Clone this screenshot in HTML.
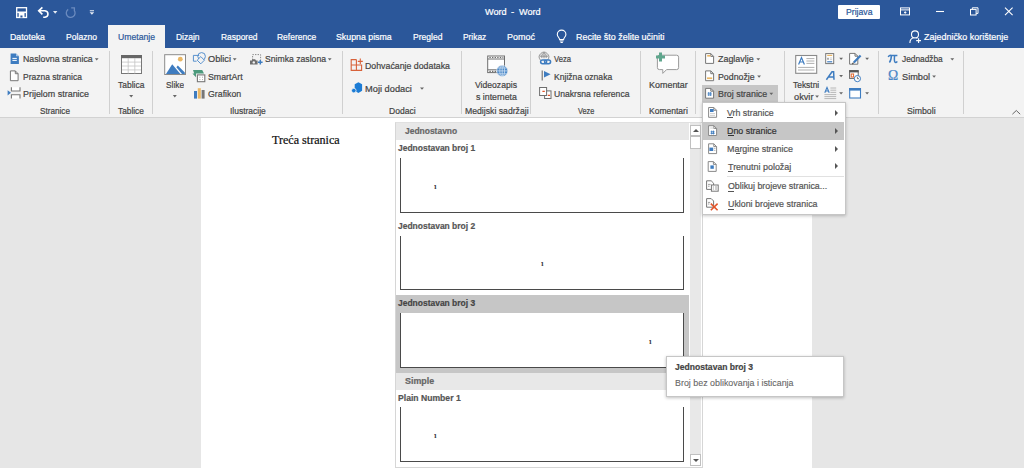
<!DOCTYPE html>
<html><head><meta charset="utf-8"><title>Word</title>
<style>
html,body{margin:0;padding:0}
body{width:1024px;height:468px;overflow:hidden;position:relative;background:#e6e6e6;font-family:"Liberation Sans",sans-serif;font-size:9.7px}
.t{position:absolute;white-space:pre;line-height:1;transform-origin:0 0;font-size:9.7px;-webkit-text-stroke:.22px currentColor}
.a{position:absolute}
svg{position:absolute;overflow:visible}
.hdr{left:0;top:0;width:1024px;height:48px;background:#2b579a}
.tab{left:108px;top:25px;width:57px;height:24px;background:#f3f3f3}
.rib{left:0;top:48px;width:1024px;height:69px;background:#f3f3f3;border-bottom:1px solid #d2d2d2}
.dv{position:absolute;top:51px;width:1px;height:63px;background:#d0d0d0}
.page{left:201px;top:118px;width:611px;height:350px;background:#fff}
.gal{left:395px;top:122px;width:308px;height:346px;background:#fff;border:1px solid #d6d6d6;border-top-color:#e0e0e0;box-sizing:border-box}
.band{position:absolute;left:396px;width:293px;height:17px;background:#e8e8e8}
.pv{position:absolute;left:400px;width:284px;height:55px;border:1px solid #4a4a4a;border-top:none;box-sizing:border-box;background:#fff}
.one{position:absolute;width:2px;height:4px;background:#555}
.menu{left:702px;top:102px;width:144px;height:113px;background:#fff;box-shadow:0 1px 3px rgba(0,0,0,.22);border:1px solid #c6c6c6;box-sizing:border-box}
.tip{left:666px;top:356px;width:178px;height:41px;background:#fff;border:1px solid #c6c6c6;box-sizing:border-box;box-shadow:0 1px 3px rgba(0,0,0,.25)}
.arr{position:absolute;width:0;height:0;border-left:2.5px solid transparent;border-right:2.5px solid transparent;border-top:3px solid #666}
.sub{position:absolute;width:0;height:0;border-top:3px solid transparent;border-bottom:3px solid transparent;border-left:3.5px solid #555}
.ul{position:absolute;height:1px;background:#555}

</style></head>
<body>
<div class="a hdr"></div>
<div class="a tab"></div>
<div class="a rib"></div>
<div class="a page"></div>

<!-- dividers -->
<div class="dv" style="left:109px"></div><div class="dv" style="left:152px"></div><div class="dv" style="left:342px"></div>
<div class="dv" style="left:461px"></div><div class="dv" style="left:530px"></div><div class="dv" style="left:640px"></div>
<div class="dv" style="left:695px"></div><div class="dv" style="left:784px"></div><div class="dv" style="left:878px"></div><div class="dv" style="left:963px"></div>

<!-- Broj stranice highlight -->
<div class="a" style="left:702px;top:85px;width:76px;height:17px;background:#c6c6c6"></div>

<!-- title bar controls -->
<div class="a" style="left:838px;top:5px;width:42px;height:14px;background:#fff;border-radius:1px"></div>

<!-- gallery -->
<div class="a gal"></div>
<div class="band" style="top:123px"></div>
<div class="a" style="left:396px;top:295px;width:293px;height:78px;background:#c6c6c6"></div>
<div class="band" style="top:373px"></div>
<div class="pv" style="top:158px"></div>
<div class="pv" style="top:236px;height:54px"></div>
<div class="pv" style="top:313px"></div>
<div class="pv" style="top:407px"></div>
<!-- scrollbar -->
<div class="a" style="left:690px;top:123px;width:11px;height:343px;background:#e8e8e8"></div>
<div class="a" style="left:690px;top:125px;width:11px;height:11px;background:#fff;border:1px solid #c0c0c0;box-sizing:border-box"></div>
<div class="a" style="left:690px;top:136px;width:11px;height:13px;background:#fff;border:1px solid #c0c0c0;box-sizing:border-box"></div>
<div class="a" style="left:690px;top:454px;width:11px;height:12px;background:#fff;border:1px solid #c0c0c0;box-sizing:border-box"></div>
<div class="arr" style="left:692.6px;top:128.6px;border-left-width:3px;border-right-width:3px;border-top:none;border-bottom:3.4px solid #555"></div>
<div class="arr" style="left:692.6px;top:458.6px;border-left-width:3px;border-right-width:3px;border-top:3.4px solid #555"></div>

<!-- menu -->
<div class="a menu"></div>
<div class="a" style="left:703px;top:122px;width:141px;height:18px;background:#c6c6c6"></div>
<div class="a" style="left:727px;top:176px;width:117px;height:1px;background:#e1e1e1"></div>
<div class="sub" style="left:835px;top:110px"></div><div class="sub" style="left:835px;top:128px"></div>
<div class="sub" style="left:835px;top:146px"></div><div class="sub" style="left:835px;top:163px"></div>

<div class="ul" style="left:727.4px;top:117.4px;width:5.6px"></div>
<div class="ul" style="left:727.6px;top:135.1px;width:6px;background:#333"></div>
<div class="ul" style="left:735.6px;top:153.1px;width:4.6px"></div>
<div class="ul" style="left:727.6px;top:171.2px;width:5px"></div>
<div class="ul" style="left:727.8px;top:190.7px;width:6.4px"></div>
<div class="ul" style="left:727.8px;top:208.7px;width:6px"></div>
<!-- tooltip -->
<div class="a tip"></div>
<svg class="a" style="left:0;top:0" width="1024" height="468" viewBox="0 0 1024 468" fill="none">
<!-- ===== QAT ===== -->
<g stroke="#fff" fill="none" stroke-width="1.3">
  <rect x="16.7" y="7.7" width="9.8" height="9.8"/>
  <rect x="17.2" y="11.5" width="8.8" height="1.6" fill="#fff" stroke="none"/>
  <rect x="18.7" y="13" width="5.8" height="4.6" fill="#fff" stroke="none"/>
  <rect x="20.4" y="15.5" width="2.1" height="2" fill="#2b579a" stroke="none"/>
  <!-- undo -->
  <path d="M42.4 7.3 L38.7 10.8 L42.4 14.3 M39 10.8 H44.9 A3.7 3.3 0 0 1 44.9 17.3 H43.2" stroke-width="1.6"/>
</g>
<path d="M53 11 h4.4 l-2.2 2.7z" fill="#e6ebf3"/>
<path d="M68.2 9.4 A4.4 4.4 0 1 0 74.2 10.4 M71.2 7.9 H74.4 V11.2" stroke="#6b8bbf" stroke-width="1.3" fill="none"/>
<path d="M89.8 10.2 h4.2 v1 h-4.2z M89.6 12.2 h4.6 l-2.3 2.6z" fill="#e6ebf3"/>

<!-- ===== Title controls ===== -->
<g stroke="#fff" stroke-width="1" fill="none">
  <rect x="900.5" y="7.9" width="9" height="7"/><path d="M900.5 9.9 h9" />
  <path d="M904 12.5 h2.4 M905.2 11.2 v2.6" stroke-width=".9"/>
  <path d="M936 11.5 h8" stroke-width="1.1"/>
  <rect x="970.5" y="9.4" width="5.6" height="5.6"/><path d="M972.3 9.4 V7.8 h5.7 v5.6 h-1.9"/>
  <path d="M1005 7.6 l7.6 7.6 M1012.6 7.6 l-7.6 7.6" stroke-width="1.1"/>
</g>
<!-- lightbulb -->
<g stroke="#fff" stroke-width="1.1" fill="none">
  <path d="M559.6 39.6 C559.6 37.6 557.3 36.8 557.3 34.4 A4.3 4.3 0 0 1 565.9 34.4 C565.9 36.8 563.6 37.6 563.6 39.6 Z"/>
  <path d="M559.9 41 h3.5 M560.5 42.5 h2.3"/>
</g>
<!-- share -->
<g stroke="#fff" stroke-width="1.1" fill="none">
  <circle cx="915" cy="34.4" r="3.5"/>
  <path d="M909.9 43 C909.9 40 911.6 38.3 913.6 37.8 M916.4 37.8 L917.4 38.4"/>
  <path d="M916.2 40.6 h4.8 M918.6 38.2 v4.8"/>
</g>

<!-- ===== Stranice ===== -->
<path d="M10.6 53.4 h5.4 l2.9 2.9 v7.6 h-8.3z" fill="#3e7cc0"/>
<path d="M16 53.4 v2.9 h2.9z" fill="#a9c6e6"/>
<path d="M12.4 58.4 h4.4 M12.4 60.4 h4.4" stroke="#fff" stroke-width="1"/>
<path d="M10.4 70.9 h4.9 l2.8 2.8 v7 h-7.7z" fill="#fff" stroke="#777" stroke-width="1"/>
<path d="M15.3 70.9 v2.8 h2.8" stroke="#777" stroke-width="1"/>
<path d="M7.6 90.2 l3.4 2.6 l-3.4 2.6z" fill="#3e7cc0"/>
<path d="M11.4 87.2 v3.8 h8.6 v-3.8 M11.4 98.4 v-3.6 h8.6 v3.6" stroke="#777" stroke-width="1.1" fill="#fff"/>
<!-- arrows small -->
<g fill="#666">
<path d="M94.8 58.2 h3.8 l-1.9 2.3z"/>
<path d="M129.2 95 h4 l-2 2.4z"/><path d="M172.8 95 h4 l-2 2.4z"/>
<path d="M232.8 58.2 h3.8 l-1.9 2.3z"/><path d="M327.8 58.2 h3.8 l-1.9 2.3z"/>
<path d="M420 87.4 h4 l-2 2.4z"/>
<path d="M756.4 58.2 h3.8 l-1.9 2.3z"/><path d="M757.2 75.4 h3.8 l-1.9 2.3z"/><path d="M769.4 92.8 h3.8 l-1.9 2.3z"/>
<path d="M815.2 95.4 h3.8 l-1.9 2.3z"/>
<path d="M839.2 57.8 h3.8 l-1.9 2.3z"/><path d="M839.2 75 h3.8 l-1.9 2.3z"/><path d="M839.2 92.2 h3.8 l-1.9 2.3z"/>
<path d="M865.2 57.8 h3.8 l-1.9 2.3z"/><path d="M865.2 92.2 h3.8 l-1.9 2.3z"/>
<path d="M950.4 58.2 h3.8 l-1.9 2.3z"/><path d="M932.2 75.4 h3.8 l-1.9 2.3z"/>
</g>

<!-- ===== Tablica ===== -->
<rect x="121.5" y="55.5" width="20" height="18" fill="#fff" stroke="#777" stroke-width="1"/>
<rect x="121" y="55" width="21" height="3.2" fill="#666"/>
<path d="M128.2 58 v15.5 M134.8 58 v15.5 M122 62.1 h19 M122 66 h19 M122 69.9 h19" stroke="#c4c4c4" stroke-width=".8"/>
<!-- ===== Slike ===== -->
<rect x="164.7" y="54.7" width="20.8" height="19.8" fill="#fff" stroke="#8a8a8a" stroke-width="1"/>
<circle cx="180.3" cy="59.2" r="2.4" fill="#eab765"/>
<path d="M166 74 L172.2 64.2 L180.4 74z" fill="#3e7cc0"/>
<path d="M176.4 67.2 L177.8 65.4 L184.8 72.6 V74 H182z" fill="#3e7cc0"/>
<!-- ===== Oblici ===== -->
<g stroke="#4f8bcb" stroke-width=".95" fill="none">
  <circle cx="201.6" cy="56.4" r="3.8"/>
  <path d="M199.2 55.4 H193.4 v5.8 h3.2"/>
  <path d="M200.8 56.6 l3.6 3.6 l-3.6 3.6 l-3.6 -3.6z" fill="#f3f3f3"/>
</g>
<!-- SmartArt -->
<path d="M193 70 h9.2 l1.8 3.6 h-8 v3.6 l-3.6 -3.6 h1.8z" fill="#4b9a7c"/>
<rect x="197.4" y="74.9" width="7.4" height="6.8" fill="#fff" stroke="#777" stroke-width="1.1"/>
<path d="M199.4 77.2 h1 M202 77.2 h1 M199.4 79.6 h1 M202 79.6 h1" stroke="#aaa" stroke-width="1"/>
<!-- Grafikon -->
<rect x="194" y="91" width="3" height="7.6" fill="#3e7cc0"/><rect x="197.8" y="88.2" width="3" height="10.4" fill="#eab765"/><rect x="201.6" y="90" width="3" height="8.6" fill="#777"/>
<!-- Snimka zaslona -->
<path d="M252.6 60 V54.6 H260.6 V60" stroke="#888" stroke-width="1" stroke-dasharray="1.4 1.2"/>
<path d="M250 60.4 h1.8 l.8-1.2 h2.6 l.8 1.2 h1.6 v4.2 h-7.6z" fill="#6e6e6e"/>
<circle cx="253.8" cy="62.4" r="1.2" fill="#f3f3f3"/>
<path d="M258 62.3 h4.6 M260.3 60 v4.6" stroke="#3e7cc0" stroke-width="1.5"/>

<!-- ===== Dodaci ===== -->
<g stroke="#d8623a" stroke-width="1.1" fill="none">
  <path d="M356.4 59.6 H351.2 V70.4 H361.6 V65 H351.2 M356.4 59.6 V70.4"/>
  <path d="M357.8 61.4 h5 M360.3 58.6 v5.4"/>
</g>
<path d="M358.4 82.2 l3.7 2 v6.6 l-3.7 2.1 l-3.7 -2.1 v-6.6z" fill="#1c7cd5"/>
<circle cx="353.8" cy="90.6" r="2.3" fill="#1c7cd5" stroke="#f3f3f3" stroke-width=".8"/>

<!-- ===== Video ===== -->
<rect x="487.7" y="56" width="16.8" height="16.6" fill="#fff" stroke="#6e6e6e" stroke-width="1"/>
<path d="M487.7 59 h16.8 M487.7 69.8 h16.8" stroke="#6e6e6e" stroke-width="1"/>
<path d="M489.4 57.5 h14 M489.4 71.3 h7" stroke="#6e6e6e" stroke-width="1.2" stroke-dasharray="1.4 1.2"/>
<circle cx="502.2" cy="70.9" r="5.6" fill="#4c8ac9" stroke="#f3f3f3" stroke-width=".6"/>
<g stroke="#dbe8f6" stroke-width=".7" fill="none">
  <ellipse cx="502.2" cy="70.9" rx="2.4" ry="5.2"/><path d="M502.2 65.6 v10.6 M496.8 70.9 h10.8 M497.6 68 h9.2 M497.6 73.8 h9.2"/>
</g>

<!-- ===== Veze ===== -->
<g stroke="#8a8a8a" stroke-width=".9" fill="none">
  <path d="M540.4 60 A4.7 4.7 0 1 1 547.6 60"/>
  <path d="M544 52.6 v5.6 M539.8 56.2 h8.4 M541.9 58 C541.4 56 542 53.6 544 52.6 C546 53.6 546.6 56 546.1 58"/>
</g>
<g stroke="#3e7cc0" stroke-width="1.5" fill="none">
  <rect x="540.6" y="59.9" width="6" height="3.8" rx="1.9"/><rect x="544.6" y="59.9" width="6" height="3.8" rx="1.9"/>
</g>
<path d="M542.2 70.6 v10" stroke="#6e6e6e" stroke-width="1.1"/>
<path d="M544 71 l6.6 3.3 l-6.6 3.3z" fill="#3e7cc0"/>
<g stroke="#6e6e6e" stroke-width="1" fill="#fff">
  <rect x="544.6" y="90.9" width="6.4" height="7.6"/>
  <rect x="539.6" y="87.5" width="7" height="8"/>
</g>
<path d="M542.4 91.3 h2.4 M547.8 95.4 h2.2" stroke="#e2552b" stroke-width="1.3"/>

<!-- ===== Komentar ===== -->
<path d="M659.4 55.2 h17.2 a2 2 0 0 1 2 2 v10.4 a2 2 0 0 1 -2 2 h-10 l-3.8 3.8 v-3.8 h-3.4 a2 2 0 0 1 -2 -2 v-10.4 a2 2 0 0 1 2 -2z" fill="#fff" stroke="#9a9a9a" stroke-width="1"/>
<path d="M656 57 h9 M660.5 52.5 v9" stroke="#5fa68d" stroke-width="3"/>

<!-- ===== Zaglavlje etc ===== -->
<g stroke="#777" stroke-width="1" fill="#fff">
  <path d="M705.6 53.6 h5.2 l2.8 2.8 v7 h-8z"/><path d="M710.8 53.6 v2.8 h2.8" fill="none"/>
  <path d="M705.6 70.9 h5.2 l2.8 2.8 v7 h-8z"/><path d="M710.8 70.9 v2.8 h2.8" fill="none"/>
  <path d="M705.6 88.4 h5.2 l2.8 2.8 v7 h-8z"/><path d="M710.8 88.4 v2.8 h2.8" fill="none"/>
</g>
<rect x="707.2" y="55" width="3.2" height="1.6" fill="#eab765"/>
<rect x="707" y="77.4" width="5.2" height="1.7" fill="#eab765"/>
<path d="M708.7 92 v4 M710.6 92 v4 M707.6 93.2 h4.2 M707.6 94.9 h4.2" stroke="#3e7cc0" stroke-width=".8"/>

<!-- ===== Tekst group ===== -->
<rect x="795.7" y="55.5" width="21" height="17.8" fill="#fff" stroke="#8a8a8a" stroke-width="1.1"/>
<path d="M798.6 64.4 l2.9 -6.8 l2.9 6.8 M799.7 62 h3.6" stroke="#3e7cc0" stroke-width="1.2" fill="none"/>
<path d="M806.4 58.6 h8 M806.4 61 h8 M806.4 63.4 h8 M798 67.4 h16.4 M798 70 h16.4" stroke="#b0b0b0" stroke-width="1"/>
<!-- quick parts -->
<rect x="825.7" y="53.6" width="8" height="10" fill="#fff" stroke="#777" stroke-width="1"/>
<path d="M827.2 55.4 h5" stroke="#eab765" stroke-width="1.2"/><path d="M827.2 61.8 h5" stroke="#3e7cc0" stroke-width="1.2"/>
<path d="M827.2 57.8 h1.6 v2 h-1.6z" fill="#999"/><path d="M829.8 58 h2.4 M829.8 59.6 h2.4" stroke="#bbb" stroke-width=".7"/>
<!-- wordart -->
<path d="M826.4 79.8 l5.6 -8 h1.6 l.4 8 M828.6 77 h5" stroke="#3e7cc0" stroke-width="1.5" fill="none"/>
<!-- drop cap -->
<path d="M824.8 92.8 l2.2 -5.4 l2.2 5.4 M825.6 91 h2.8" stroke="#3e7cc0" stroke-width="1.1" fill="none"/>
<path d="M830.4 88 h5.8 M830.4 90.2 h5.8 M830.4 92.4 h5.8 M824.4 94.6 h11.8 M824.4 96.6 h11.8 M824.4 98.6 h11.8" stroke="#b0b0b0" stroke-width=".9"/>
<!-- signature line -->
<path d="M849.6 53.4 h5.4 l2.8 2.8 v8 h-8.2z" fill="#fff" stroke="#777" stroke-width="1"/>
<path d="M855 53.4 v2.8 h2.8" stroke="#777" stroke-width="1" fill="none"/>
<path d="M860.6 55.4 l-6.8 7" stroke="#3e7cc0" stroke-width="2.2"/>
<path d="M853.6 62.6 l-1.4 1.6" stroke="#555" stroke-width="1.2"/>
<!-- date time -->
<rect x="849.6" y="70.6" width="8.6" height="7.8" fill="#fff" stroke="#666" stroke-width="1"/>
<rect x="849.2" y="70.2" width="9.4" height="2.2" fill="#555"/>
<rect x="851.2" y="74" width="2.4" height="3" fill="none" stroke="#e2652b" stroke-width="1"/>
<circle cx="857.4" cy="78.6" r="3.1" fill="#fff" stroke="#3e7cc0" stroke-width="1"/>
<path d="M857.4 76.8 v1.9 h1.6" stroke="#555" stroke-width=".8" fill="none"/>
<!-- object -->
<rect x="849.7" y="88.6" width="10.8" height="9.4" fill="#fff" stroke="#3e7cc0" stroke-width="1.1"/>
<rect x="849.2" y="88" width="11.8" height="2.6" fill="#3e7cc0"/>

<!-- pi -->
<path d="M888.2 57 C889 55.4 890 55.2 891.4 55.4 H897.4 M891.4 55.6 C891.3 58.6 890.8 61 889.4 62.6 M894.6 55.6 C894.3 58.4 894.2 60.8 894.8 61.8 C895.4 62.8 896.6 62.6 897.2 61.4" stroke="#3e7cc0" stroke-width="1.5" fill="none"/>
<!-- collapse chevron -->
<path d="M1012.4 114.2 l3.9 -3.7 l3.9 3.7" stroke="#666" stroke-width="1" fill="none"/>

<!-- ===== menu icons ===== -->
<g stroke="#848484" stroke-width=".95" fill="#fff">
  <path d="M708.6 107.5 h5.2 l2.8 2.8 v7 h-8z"/><path d="M713.8 107.5 v2.8 h2.8" fill="none"/>
  <path d="M708.6 125.7 h5.2 l2.8 2.8 v7 h-8z"/><path d="M713.8 125.7 v2.8 h2.8" fill="none"/>
  <path d="M708.6 143.8 h5.2 l2.8 2.8 v7 h-8z"/><path d="M713.8 143.8 v2.8 h2.8" fill="none"/>
  <path d="M708.2 161.6 h5.2 l2.8 2.8 v7 h-8z"/><path d="M713.4 161.6 v2.8 h2.8" fill="none"/>
</g>
<rect x="710" y="109" width="3.6" height="3" fill="#3e7cc0"/>
<path d="M710 113.6 h5 M710 115.4 h5" stroke="#c4c4c4" stroke-width=".8"/>
<path d="M710.2 128 h4.6" stroke="#c4c4c4" stroke-width=".8"/>
<path d="M711.7 130.6 v3.8 M713.5 130.6 v3.8 M710.6 131.8 h4 M710.6 133.4 h4" stroke="#3e7cc0" stroke-width=".9"/>
<rect x="709.4" y="147.6" width="3.8" height="3.4" fill="#3e7cc0"/>
<path d="M714.2 148.4 h1.2 M714.2 150.4 h1.2" stroke="#999" stroke-width=".8"/>
<rect x="710.4" y="165.4" width="3.4" height="3.4" fill="#3e7cc0"/>
<!-- format page numbers -->
<path d="M706.6 180.8 h4.6 l2.4 2.4 v6.2 h-7z" fill="#fff" stroke="#777" stroke-width="1"/>
<path d="M708 184.4 h2.6 M708 186.2 h1.6" stroke="#888" stroke-width=".8"/>
<rect x="711.4" y="185" width="6.8" height="6.2" fill="#fff" stroke="#777" stroke-width="1"/>
<path d="M712.8 187 h1.2 M715 187 h2 M712.8 189 h1.2 M715 189 h2" stroke="#888" stroke-width=".8"/>
<!-- remove page numbers -->
<path d="M706.6 198.6 h4.6 l2.4 2.4 v6.2 h-7z" fill="#fff" stroke="#777" stroke-width="1"/>
<path d="M708 202.4 h2.2 M708 204 h1.4" stroke="#888" stroke-width=".8"/>
<path d="M710.8 203.6 l6.8 6.6 M717.6 203.6 l-6.8 6.6" stroke="#e2552b" stroke-width="1.6"/>
</svg>

<!-- text layer -->
<span class="t" style="left:484.5px;top:6.8px;color:#fff;transform:scaleX(0.944);">Word</span>
<span class="t" style="left:511.3px;top:6.8px;color:#fff;transform:scaleX(0.989);">-</span>
<span class="t" style="left:519.2px;top:6.8px;color:#fff;transform:scaleX(0.940);">Word</span>
<span class="t" style="left:845.5px;top:6.8px;color:#2b579a;transform:scaleX(0.895);">Prijava</span>
<span class="t" style="left:10.0px;top:31.8px;color:#fff;transform:scaleX(0.902);">Datoteka</span>
<span class="t" style="left:66.0px;top:31.8px;color:#fff;transform:scaleX(0.885);">Polazno</span>
<span class="t" style="left:176.0px;top:31.8px;color:#fff;transform:scaleX(0.873);">Dizajn</span>
<span class="t" style="left:220.5px;top:31.8px;color:#fff;transform:scaleX(0.869);">Raspored</span>
<span class="t" style="left:277.3px;top:31.8px;color:#fff;transform:scaleX(0.875);">Reference</span>
<span class="t" style="left:336.3px;top:31.8px;color:#fff;transform:scaleX(0.907);">Skupna pisma</span>
<span class="t" style="left:412.8px;top:31.8px;color:#fff;transform:scaleX(0.883);">Pregled</span>
<span class="t" style="left:463.0px;top:31.8px;color:#fff;transform:scaleX(0.862);">Prikaz</span>
<span class="t" style="left:506.7px;top:31.8px;color:#fff;transform:scaleX(0.928);">Pomoć</span>
<span class="t" style="left:576.0px;top:31.8px;color:#fff;transform:scaleX(0.923);">Recite što želite učiniti</span>
<span class="t" style="left:924.0px;top:31.8px;color:#fff;transform:scaleX(0.925);">Zajedničko korištenje</span>
<span class="t" style="left:118.0px;top:31.8px;color:#2b579a;transform:scaleX(0.892);">Umetanje</span>
<span class="t" style="left:22.8px;top:54.4px;color:#444;transform:scaleX(0.905);">Naslovna stranica</span>
<span class="t" style="left:22.8px;top:71.7px;color:#444;transform:scaleX(0.875);">Prazna stranica</span>
<span class="t" style="left:22.8px;top:89.1px;color:#444;transform:scaleX(0.922);">Prijelom stranice</span>
<span class="t" style="left:118.3px;top:79.8px;color:#444;transform:scaleX(0.875);">Tablica</span>
<span class="t" style="left:166.2px;top:79.8px;color:#444;transform:scaleX(0.857);">Slike</span>
<span class="t" style="left:207.8px;top:54.4px;color:#444;transform:scaleX(0.949);">Oblici</span>
<span class="t" style="left:207.8px;top:71.7px;color:#444;transform:scaleX(0.908);">SmartArt</span>
<span class="t" style="left:207.8px;top:89.1px;color:#444;transform:scaleX(0.906);">Grafikon</span>
<span class="t" style="left:264.7px;top:54.4px;color:#444;transform:scaleX(0.892);">Snimka zaslona</span>
<span class="t" style="left:365.3px;top:60.8px;color:#444;transform:scaleX(0.907);">Dohvaćanje dodataka</span>
<span class="t" style="left:365.3px;top:83.9px;color:#444;transform:scaleX(0.957);">Moji dodaci</span>
<span class="t" style="left:475.0px;top:79.8px;color:#444;transform:scaleX(0.889);">Videozapis</span>
<span class="t" style="left:475.8px;top:91.9px;color:#444;transform:scaleX(0.904);">s interneta</span>
<span class="t" style="left:553.8px;top:54.4px;color:#444;transform:scaleX(0.789);">Veza</span>
<span class="t" style="left:553.8px;top:71.7px;color:#444;transform:scaleX(0.886);">Knjižna oznaka</span>
<span class="t" style="left:553.8px;top:89.1px;color:#444;transform:scaleX(0.887);">Unakrsna referenca</span>
<span class="t" style="left:648.7px;top:79.8px;color:#444;transform:scaleX(0.924);">Komentar</span>
<span class="t" style="left:718.3px;top:54.4px;color:#444;transform:scaleX(0.921);">Zaglavlje</span>
<span class="t" style="left:718.3px;top:71.7px;color:#444;transform:scaleX(0.908);">Podnožje</span>
<span class="t" style="left:718.3px;top:89.1px;color:#444;transform:scaleX(0.914);">Broj stranice</span>
<span class="t" style="left:793.3px;top:79.8px;color:#444;transform:scaleX(0.869);">Tekstni</span>
<span class="t" style="left:793.8px;top:91.9px;color:#444;transform:scaleX(0.953);">okvir</span>
<span class="t" style="left:901.6px;top:54.4px;color:#444;transform:scaleX(0.859);">Jednadžba</span>
<span class="t" style="left:901.6px;top:71.7px;color:#444;transform:scaleX(0.949);">Simbol</span>
<span class="t" style="left:888.4px;top:69.3px;color:#4a86c6;font-size:13.6px;font-family:'Liberation Serif',serif;transform:scaleX(1.009);">Ω</span>
<span class="t" style="left:39.5px;top:106.1px;color:#444;transform:scaleX(0.844);">Stranice</span>
<span class="t" style="left:118.3px;top:106.1px;color:#444;transform:scaleX(0.859);">Tablice</span>
<span class="t" style="left:229.7px;top:106.1px;color:#444;transform:scaleX(0.875);">Ilustracije</span>
<span class="t" style="left:388.7px;top:106.1px;color:#444;transform:scaleX(0.882);">Dodaci</span>
<span class="t" style="left:464.7px;top:106.1px;color:#444;transform:scaleX(0.895);">Medijski sadržaji</span>
<span class="t" style="left:577.5px;top:106.1px;color:#444;transform:scaleX(0.756);">Veze</span>
<span class="t" style="left:648.7px;top:106.1px;color:#444;transform:scaleX(0.879);">Komentari</span>
<span class="t" style="left:906.7px;top:106.1px;color:#444;transform:scaleX(0.900);">Simboli</span>
<span class="t" style="left:272.0px;top:134.1px;color:#111;font-size:12px;font-family:'Liberation Serif',serif;transform:scaleX(1.007);">Treća stranica</span>
<span class="t" style="left:405.3px;top:126.4px;color:#666;font-weight:700;transform:scaleX(0.873);">Jednostavno</span>
<span class="t" style="left:398.3px;top:143.1px;color:#555;font-weight:700;transform:scaleX(0.874);">Jednostavan broj 1</span>
<span class="t" style="left:398.3px;top:220.6px;color:#555;font-weight:700;transform:scaleX(0.874);">Jednostavan broj 2</span>
<span class="t" style="left:398.3px;top:298.1px;color:#444;font-weight:700;transform:scaleX(0.874);">Jednostavan broj 3</span>
<span class="t" style="left:405.3px;top:376.1px;color:#666;font-weight:700;transform:scaleX(0.919);">Simple</span>
<span class="t" style="left:398.3px;top:392.6px;color:#555;font-weight:700;transform:scaleX(0.889);">Plain Number 1</span>
<span class="t" style="left:727.3px;top:108.0px;color:#555;transform:scaleX(0.910);">Vrh stranice</span>
<span class="t" style="left:727.3px;top:125.7px;color:#333;transform:scaleX(0.914);">Dno stranice</span>
<span class="t" style="left:727.3px;top:143.7px;color:#555;transform:scaleX(0.920);">Margine stranice</span>
<span class="t" style="left:727.7px;top:161.8px;color:#555;transform:scaleX(0.923);">Trenutni položaj</span>
<span class="t" style="left:727.7px;top:181.3px;color:#555;transform:scaleX(0.911);">Oblikuj brojeve stranica...</span>
<span class="t" style="left:727.7px;top:199.3px;color:#555;transform:scaleX(0.913);">Ukloni brojeve stranica</span>
<span class="t" style="left:434.2px;top:184.9px;color:#222;font-weight:700;font-size:5.6px;font-family:'Liberation Serif',serif;transform:scaleX(0.930);">1</span>
<span class="t" style="left:541.0px;top:262.4px;color:#222;font-weight:700;font-size:5.6px;font-family:'Liberation Serif',serif;transform:scaleX(0.930);">1</span>
<span class="t" style="left:648.6px;top:339.9px;color:#222;font-weight:700;font-size:5.6px;font-family:'Liberation Serif',serif;transform:scaleX(0.930);">1</span>
<span class="t" style="left:434.2px;top:433.9px;color:#222;font-weight:700;font-size:5.6px;font-family:'Liberation Serif',serif;transform:scaleX(0.930);">1</span>
<span class="t" style="left:674.6px;top:362.4px;color:#444;font-weight:700;transform:scaleX(0.885);">Jednostavan broj 3</span>
<span class="t" style="left:675.0px;top:377.6px;color:#666;transform:scaleX(0.917);-webkit-text-stroke:.1px currentColor;">Broj bez oblikovanja i isticanja</span>
</body></html>
